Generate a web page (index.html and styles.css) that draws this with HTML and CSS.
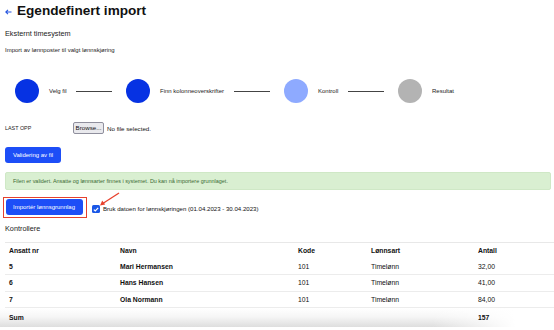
FILE: index.html
```html
<!DOCTYPE html>
<html lang="no">
<head>
<meta charset="utf-8">
<link rel="stylesheet" href="styles.css">
</head>
<body>
<header class="title">
  <svg class="back" width="7" height="6" viewBox="0 0 7 6"><path d="M6.5 3H1M3 0.8L0.8 3L3 5.2" fill="none" stroke="#2454e0" stroke-width="1.1"/></svg>
  <h1>Egendefinert import</h1>
</header>
<h2 class="sub">Eksternt timesystem</h2>
<p class="desc">Import av lønnposter til valgt lønnskjøring</p>

<div class="steps">
  <div class="step"><span class="dot done"></span><span class="lbl l1">Velg fil</span><span class="line"></span></div>
  <div class="step"><span class="dot done"></span><span class="lbl l2">Finn kolonneoverskrifter</span><span class="line"></span></div>
  <div class="step"><span class="dot active"></span><span class="lbl l3">Kontroll</span><span class="line"></span></div>
  <div class="step"><span class="dot todo"></span><span class="lbl">Resultat</span></div>
</div>

<div class="upload">
  <span class="upload-lbl">LAST OPP</span>
  <span class="browse">Browse...</span>
  <span class="nofile">No file selected.</span>
</div>

<button class="btn validate">Validering av fil</button>

<div class="alert">Filen er validert. Ansatte og lønnsarter finnes i systemet. Du kan nå importere grunnlaget.</div>

<div class="import-row">
  <div class="highlight"><button class="btn import">Importér lønnsgrunnlag</button></div>
  <span class="check"><svg width="6" height="5" viewBox="0 0 6 5"><path d="M0.8 2.6L2.3 4L5.2 0.9" fill="none" stroke="#fff" stroke-width="1.2"/></svg></span>
  <span class="check-lbl">Bruk datoen for lønnskjøringen (01.04.2023 - 30.04.2023)</span>
  <svg class="pointer" width="22" height="14" viewBox="0 0 22 14"><path d="M20 1L3 12" stroke="#e8402c" stroke-width="1.3" fill="none"/><path d="M1 13.5L3.2 8.6L6.2 12.4Z" fill="#e8402c"/></svg>
</div>

<h3 class="sub ctrl">Kontrollere</h3>

<div class="table">
  <div class="row head"><span>Ansatt nr</span><span>Navn</span><span>Kode</span><span>Lønnsart</span><span>Antall</span></div>
  <div class="row"><span class="b">5</span><span class="b">Mari Hermansen</span><span>101</span><span>Timelønn</span><span>32,00</span></div>
  <div class="row"><span class="b">6</span><span class="b">Hans Hansen</span><span>101</span><span>Timelønn</span><span>41,00</span></div>
  <div class="row"><span class="b">7</span><span class="b">Ola Normann</span><span>101</span><span>Timelønn</span><span>84,00</span></div>
  <div class="row sum"><span class="b">Sum</span><span></span><span></span><span></span><span class="b">157</span></div>
</div>
</body>
</html>
```
FILE: styles.css
```css
* { box-sizing: border-box; }
html, body { margin: 0; padding: 0; background: #fff; }
body {
  width: 554px;
  height: 330px;
  overflow: hidden;
  padding: 0 0 0 5px;
  font-family: "Liberation Sans", Arial, sans-serif;
  color: #1a1a1a;
}
.title {
  display: flex;
  align-items: center;
  gap: 5px;
  margin-top: 3px;
  height: 16px;
}
.back { margin-top: 1px; }
h1 {
  margin: 0;
  font-size: 13.6px;
  line-height: 16px;
  font-weight: bold;
  color: #111;
}
.sub {
  margin: 9.5px 0 0;
  font-size: 7.3px;
  line-height: 9px;
  font-weight: normal;
  color: #222;
}
.desc {
  margin: 8.5px 0 0;
  font-size: 6px;
  line-height: 8px;
  color: #222;
}
.steps {
  display: flex;
  align-items: center;
  margin-top: 25px;
  padding-left: 10px;
  height: 24px;
}
.step {
  display: flex;
  align-items: center;
}
.dot {
  width: 24px;
  height: 24px;
  border-radius: 50%;
  flex: none;
}
.dot.done { background: #0632e3; }
.dot.active { background: #8eaaff; }
.dot.todo { background: #b3b3b3; }
.lbl {
  margin-left: 10px;
  font-size: 6px;
  color: #222;
  white-space: nowrap;
}
.l1 { width: 27px; }
.l2 { width: 74px; }
.l3 { width: 30px; }
.line {
  width: 36px;
  height: 1px;
  background: #444;
  margin-right: 14px;
}
.upload {
  display: flex;
  align-items: center;
  margin-top: 19px;
  height: 12px;
}
.upload-lbl {
  width: 68px;
  font-size: 5.4px;
  color: #222;
}
.browse {
  height: 12px;
  width: 31px;
  border: 1px solid #8f8f9d;
  border-radius: 2px;
  background: #e9e9ed;
  font-size: 6.2px;
  line-height: 10px;
  text-align: center;
  color: #111;
}
.nofile {
  margin-left: 3px;
  font-size: 6.2px;
  color: #111;
}
.btn {
  display: block;
  border: 0;
  border-radius: 3px;
  background: #1d4ef7;
  color: #fff;
  font-family: "Liberation Sans", Arial, sans-serif;
  font-size: 6px;
  padding: 0;
  height: 16px;
}
.validate {
  margin-top: 13px;
  width: 56px;
}
.alert {
  margin-top: 9px;
  width: 546px;
  height: 18px;
  background: #d9efd1;
  border: 1px solid #cfe8c6;
  border-radius: 2px;
  color: #3b6b33;
  font-size: 5.45px;
  line-height: 16px;
  padding-left: 7px;
}
.import-row {
  position: relative;
  display: flex;
  align-items: center;
  margin-top: 6px;
  height: 22px;
}
.highlight {
  margin-left: -2px;
  border: 1.5px solid #e5402f;
  padding: 1.5px 3.5px 1.5px 1.5px;
}
.import {
  width: 77px;
  font-size: 6px;
}
.check {
  margin-left: 5px;
  margin-top: 4px;
  width: 8px;
  height: 8px;
  border-radius: 1.5px;
  background: #1a57e6;
  display: flex;
  align-items: center;
  justify-content: center;
}
.check-lbl {
  margin-left: 3px;
  margin-top: 3px;
  font-size: 6.1px;
  color: #111;
}
.pointer {
  position: absolute;
  left: 94px;
  top: -4px;
}
.ctrl {
  margin-top: 5.5px;
}
.table {
  margin-top: 9.5px;
  border-top: 1px solid #e8e8e8;
  font-size: 6.8px;
  color: #111;
}
.row {
  display: grid;
  grid-template-columns: 111px 178px 73px 107px 1fr;
  align-items: center;
  padding-left: 4px;
  height: 16.7px;
  border-bottom: 1px solid #ececec;
}
.row.head {
  height: 15.3px;
  border-bottom: 0;
  font-weight: bold;
}
.b { font-weight: bold; }
.row.sum {
  height: 19px;
  border-bottom: 0;
  margin-left: -5px;
  padding-left: 9px;
  background:
    linear-gradient(to right, rgba(255,255,255,0) 78%, #fff 93%),
    linear-gradient(to bottom, #fff 0%, #f6f6f6 45%, #dedede 100%);
}
```
